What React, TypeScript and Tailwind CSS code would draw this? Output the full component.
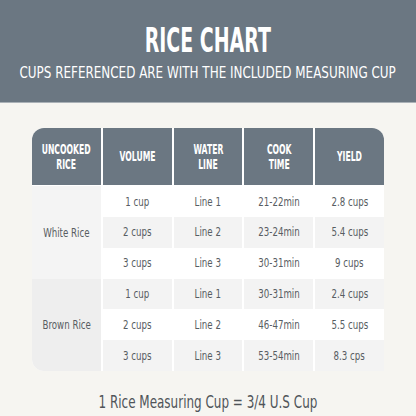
import React from 'react'

interface Row {
  volume: string
  line: string
  time: string
  yield: string
}

const white: Row[] = [
  { volume: '1 cup', line: 'Line 1', time: '21-22min', yield: '2.8 cups' },
  { volume: '2 cups', line: 'Line 2', time: '23-24min', yield: '5.4 cups' },
  { volume: '3 cups', line: 'Line 3', time: '30-31min', yield: '9 cups' },
]

const brown: Row[] = [
  { volume: '1 cup', line: 'Line 1', time: '30-31min', yield: '2.4 cups' },
  { volume: '2 cups', line: 'Line 2', time: '46-47min', yield: '5.5 cups' },
  { volume: '3 cups', line: 'Line 3', time: '53-54min', yield: '8.3 cps' },
]

const heads = [['UNCOOKED', 'RICE'], ['VOLUME'], ['WATER', 'LINE'], ['COOK', 'TIME'], ['YIELD']]

// no narrow web font offline, so the condensed look comes from a horizontal squeeze
const Sq: React.FC<{ className: string; children: React.ReactNode }> = ({ className, children }) => (
  <span className={`inline-block whitespace-nowrap ${className}`}>{children}</span>
)

const App: React.FC = () => {
  // row stripes flip between the two rice groups
  const cells = (rows: Row[], startGray: boolean) =>
    rows.map((r, i) => {
      const gray = (i % 2 === 1) !== startGray
      const bg = gray ? 'bg-[#f3f3f3]' : 'bg-white'
      return [r.volume, r.line, r.time, r.yield].map((t, j) => (
        <div key={`${t}-${i}-${j}`} className={`${bg} flex items-center justify-center`}>
          <Sq className="scale-x-[0.74]">{t}</Sq>
        </div>
      ))
    })

  return (
    <div className="w-[416px] h-[416px] bg-[#f6f5f1] flex flex-col font-['DejaVu_Sans_Condensed','DejaVu_Sans',sans-serif]">
      <div className="h-[103px] bg-[#6b7782] border-b border-[#aab1b7] flex flex-col items-center pt-[22px] text-white">
        <h1 className="font-bold text-[34px] leading-[36px]">
          <Sq className="scale-x-[0.62]">RICE CHART</Sq>
        </h1>
        <p className="text-[16px] leading-[20px] mt-[5px]">
          <Sq className="scale-x-[0.83]">CUPS REFERENCED ARE WITH THE INCLUDED MEASURING CUP</Sq>
        </p>
      </div>

      <div className="mx-auto mt-[25px] w-[352px] h-[243px] grid grid-cols-5 grid-rows-[58px_repeat(6,_1fr)] gap-x-[2px] bg-white rounded-t-[12px] rounded-bl-[12px] overflow-hidden text-[13px] text-[#585d62]">
        {heads.map((h, i) => (
          <div
            key={i}
            className="bg-[#6b7782] mb-[1px] flex flex-col items-center justify-center text-white font-bold text-[14px] leading-[15px]"
          >
            {h.map((l) => (
              <Sq key={l} className="scale-x-[0.61]">{l}</Sq>
            ))}
          </div>
        ))}

        <div className="col-start-1 row-start-2 row-span-3 bg-[#f4f4f4] flex items-center justify-center">
          <Sq className="scale-x-[0.74]">White Rice</Sq>
        </div>
        <div className="col-start-2 col-span-4 row-start-2 row-span-3 grid grid-cols-4 gap-x-[2px]">
          {cells(white, false)}
        </div>

        <div className="col-start-1 row-start-5 row-span-3 bg-[#eeeeee] flex items-center justify-center">
          <Sq className="scale-x-[0.74]">Brown Rice</Sq>
        </div>
        <div className="col-start-2 col-span-4 row-start-5 row-span-3 grid grid-cols-4 gap-x-[2px]">
          {cells(brown, true)}
        </div>
      </div>

      <p className="text-center text-[#4f5459] text-[18px] mt-[17px]">
        <Sq className="scale-x-[0.74]">1 Rice Measuring Cup = 3/4 U.S Cup</Sq>
      </p>
    </div>
  )
}

export default App
